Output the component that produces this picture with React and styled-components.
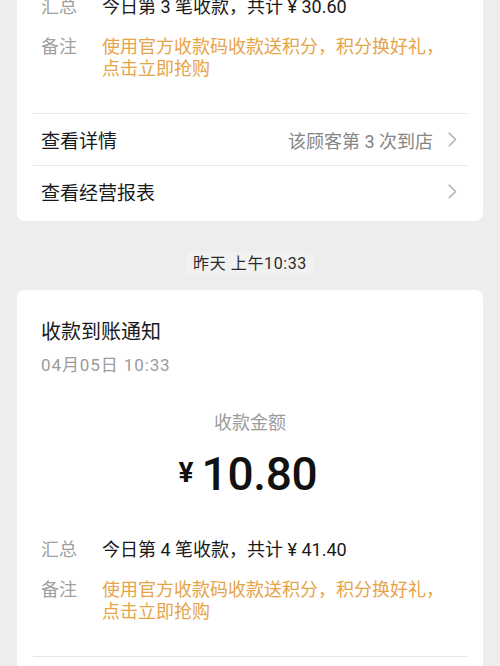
import React from 'react';
import styled, {createGlobalStyle} from "styled-components"

const GlobalStyle = createGlobalStyle`
    html, body {
        margin: 0;
        padding: 0;
        background: #ededed;
        font-family: "Roboto", "Noto Sans CJK SC", "Noto Sans", sans-serif;
        color: #191919;
        -webkit-font-smoothing: antialiased;
    }
`

const notices = [
    {
        id: 1,
        partial: true,
        summary: "今日第 3 笔收款，共计 ¥ 30.60",
        detail: "该顾客第 3 次到店",
    },
    {
        id: 2,
        time: "昨天 上午10:33",
        title: "收款到账通知",
        date: "04月05日 10:33",
        amount: "10.80",
        summary: "今日第 4 笔收款，共计 ¥ 41.40",
        detail: "该顾客第 2 次到店",
    },
]

const remark = "使用官方收款码收款送积分，积分换好礼，点击立即抢购"

const Chevron = () => (
    <svg width="9" height="15" viewBox="0 0 9 15" fill="none">
        <path d="M1.2 1.2 L7.6 7.5 L1.2 13.8" stroke="#b2b2b2" strokeWidth="1.6" strokeLinecap="round" strokeLinejoin="round"/>
    </svg>
)

const App = () => {
    return (
        <>
            <GlobalStyle/>
            <Feed>
                {notices.map(notice => (
                    <React.Fragment key={notice.id}>
                        {notice.time && (
                            <TimeWrap>
                                <TimeTag>{notice.time}</TimeTag>
                            </TimeWrap>
                        )}
                        <Card $partial={notice.partial}>
                            {/* header */}
                            {!notice.partial && (
                                <>
                                    <Title>{notice.title}</Title>
                                    <DateText>{notice.date}</DateText>
                                    <AmountLabel>收款金额</AmountLabel>
                                    <Amount>
                                        <Yen>¥</Yen>
                                        <Digits>{notice.amount}</Digits>
                                    </Amount>
                                </>
                            )}
                            {/* info rows */}
                            <InfoList $partial={notice.partial}>
                                <InfoRow>
                                    <InfoLabel>汇总</InfoLabel>
                                    <InfoValue>{notice.summary}</InfoValue>
                                </InfoRow>
                                <InfoRow>
                                    <InfoLabel>备注</InfoLabel>
                                    <InfoValue $highlight>{remark}</InfoValue>
                                </InfoRow>
                            </InfoList>
                            {/* links */}
                            <LinkList>
                                <LinkRow>
                                    <LinkText>查看详情</LinkText>
                                    <LinkExtra>{notice.detail}</LinkExtra>
                                    <Chevron/>
                                </LinkRow>
                                <LinkRow>
                                    <LinkText>查看经营报表</LinkText>
                                    <Chevron/>
                                </LinkRow>
                            </LinkList>
                        </Card>
                    </React.Fragment>
                ))}
            </Feed>
        </>
    );
}

const Feed = styled.div`
    display: flex;
    flex-direction: column;
    padding: 0 17px;
    margin-top: -24px;
    height: 690px;
    overflow: hidden;
`

const TimeWrap = styled.div`
    display: flex;
    justify-content: center;
    margin: 31px 0 15px;
`

const TimeTag = styled.span`
    font-size: 16px;
    line-height: 23px;
    padding: 0 6px;
    letter-spacing: 0.6px;
    color: #2b2b2b;
    background: #f1f1f1;
    border-radius: 3px;
`

const Card = styled.div`
    flex-shrink: 0;
    background: #fff;
    border-radius: 8px;
    padding: ${props => props.$partial ? "20px 0 4px" : "28px 0 4px"};
`

const Title = styled.div`
    padding: 0 24px;
    font-size: 20px;
    line-height: 28px;
    color: #191919;
`

const DateText = styled.div`
    padding: 0 24px;
    margin-top: 8px;
    font-size: 17px;
    line-height: 22px;
    letter-spacing: 0.9px;
    color: #9b9b9b;
`

const AmountLabel = styled.div`
    margin-top: 35px;
    text-align: center;
    font-size: 18px;
    line-height: 24px;
    color: #9b9b9b;
`

const Amount = styled.div`
    display: flex;
    justify-content: center;
    align-items: center;
    margin-top: 11px;
    height: 56px;
    padding-right: 4px;
`

const Yen = styled.span`
    font-weight: 700;
    font-size: 28px;
    line-height: 1;
    margin: 0 8px 3px 0;
    color: #111;
`

const Digits = styled.span`
    font-weight: 500;
    font-size: 46px;
    letter-spacing: -0.3px;
    line-height: 56px;
    color: #111;
`

const InfoList = styled.div`
    display: flex;
    flex-direction: column;
    gap: 18px;
    padding: 0 24px;
    margin-top: ${props => props.$partial ? "0" : "37px"};
`

const InfoRow = styled.div`
    display: flex;
    font-size: 18px;
    line-height: 22px;
`

const InfoLabel = styled.span`
    flex: 0 0 61px;
    color: #a0a0a0;
`

const InfoValue = styled.span`
    flex: 1;
    color: ${props => props.$highlight ? "#e6a449" : "#191919"};
`

const LinkList = styled.div`
    margin: 33px 16px 0;
    border-top: 1px solid #e6e6e6;

    & > div + div {
        border-top: 1px solid #e6e6e6;
    }
`

const LinkRow = styled.div`
    display: flex;
    align-items: center;
    height: 51px;
    padding: 0 10px 0 8px;
`

const LinkText = styled.span`
    flex: 1;
    font-size: 19px;
    color: #191919;
`

const LinkExtra = styled.span`
    font-size: 18px;
    color: #858585;
    margin-right: 15px;
`

export default App;
